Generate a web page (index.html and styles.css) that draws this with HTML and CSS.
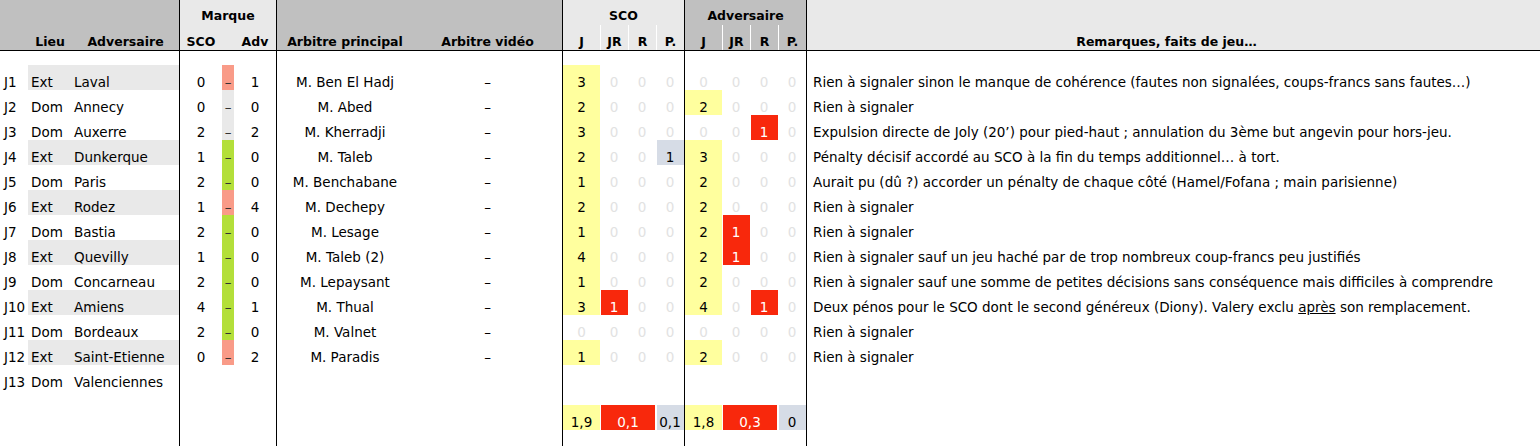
FILE: index.html
```html
<!DOCTYPE html>
<html lang="fr">
<head>
<meta charset="utf-8">
<title>Arbitrage SCO</title>
<link rel="stylesheet" href="styles.css">
</head>
<body>
<div class="sheet">
  <div class="head">
    <div class="row h1">
      <div class="grp g-left dark"></div>
      <div class="grp g-marque light bl">Marque</div>
      <div class="grp g-arb dark bl"></div>
      <div class="grp g-sco light bl">SCO</div>
      <div class="grp g-adv dark bl">Adversaire</div>
      <div class="grp g-rem light bl"></div>
    </div>
    <div class="row h2">
      <div class="hc dark"></div>
      <div class="hc dark ctr">Lieu</div>
      <div class="hc dark ctr">Adversaire</div>
      <div class="hc light bl ctr">SCO</div>
      <div class="hc light"></div>
      <div class="hc light ctr">Adv</div>
      <div class="hc dark bl ctr">Arbitre principal</div>
      <div class="hc dark ctr">Arbitre vidéo</div>
      <div class="hc light bl ctr">J</div>
      <div class="hc light wl ctr">JR</div>
      <div class="hc light wl ctr">R</div>
      <div class="hc light wl ctr">P.</div>
      <div class="hc dark bl ctr">J</div>
      <div class="hc dark wl ctr">JR</div>
      <div class="hc dark wl ctr">R</div>
      <div class="hc dark wl ctr">P.</div>
      <div class="hc light bl rem-h">Remarques, faits de jeu…</div>
    </div>
  </div>

  <div class="row gap gap-top">
    <div class="g-left"></div><div class="g-marque bl"></div><div class="g-arb bl"></div><div class="g-sco bl"></div><div class="g-adv bl"></div><div class="g-rem bl"></div>
  </div>

  <div class="row data">
    <div class="c jn">J1</div><div class="c lieu hl">Ext</div><div class="c opp hl">Laval</div>
    <div class="c ctr bl">0</div><div class="c ctr dash loss">–</div><div class="c ctr">1</div>
    <div class="c arb bl">M. Ben El Hadj</div><div class="c ctr">–</div>
    <div class="c ctr bl y">3</div><div class="c ctr z">0</div><div class="c ctr z">0</div><div class="c ctr z">0</div>
    <div class="c ctr bl z">0</div><div class="c ctr z">0</div><div class="c ctr z">0</div><div class="c ctr z">0</div>
    <div class="c rem bl">Rien à signaler sinon le manque de cohérence (fautes non signalées, coups-francs sans fautes…)</div>
  </div>
  <div class="row data">
    <div class="c jn">J2</div><div class="c lieu">Dom</div><div class="c opp">Annecy</div>
    <div class="c ctr bl">0</div><div class="c ctr dash draw">–</div><div class="c ctr">0</div>
    <div class="c arb bl">M. Abed</div><div class="c ctr">–</div>
    <div class="c ctr bl y">2</div><div class="c ctr z">0</div><div class="c ctr z">0</div><div class="c ctr z">0</div>
    <div class="c ctr bl y">2</div><div class="c ctr z">0</div><div class="c ctr z">0</div><div class="c ctr z">0</div>
    <div class="c rem bl">Rien à signaler</div>
  </div>
  <div class="row data">
    <div class="c jn">J3</div><div class="c lieu">Dom</div><div class="c opp">Auxerre</div>
    <div class="c ctr bl">2</div><div class="c ctr dash draw">–</div><div class="c ctr">2</div>
    <div class="c arb bl">M. Kherradji</div><div class="c ctr">–</div>
    <div class="c ctr bl y">3</div><div class="c ctr z">0</div><div class="c ctr z">0</div><div class="c ctr z">0</div>
    <div class="c ctr bl z">0</div><div class="c ctr z">0</div><div class="c ctr r">1</div><div class="c ctr z">0</div>
    <div class="c rem bl">Expulsion directe de Joly (20’) pour pied-haut ; annulation du 3ème but angevin pour hors-jeu.</div>
  </div>
  <div class="row data">
    <div class="c jn">J4</div><div class="c lieu hl">Ext</div><div class="c opp hl">Dunkerque</div>
    <div class="c ctr bl">1</div><div class="c ctr dash win">–</div><div class="c ctr">0</div>
    <div class="c arb bl">M. Taleb</div><div class="c ctr">–</div>
    <div class="c ctr bl y">2</div><div class="c ctr z">0</div><div class="c ctr z">0</div><div class="c ctr b">1</div>
    <div class="c ctr bl y">3</div><div class="c ctr z">0</div><div class="c ctr z">0</div><div class="c ctr z">0</div>
    <div class="c rem bl">Pénalty décisif accordé au SCO à la fin du temps additionnel… à tort.</div>
  </div>
  <div class="row data">
    <div class="c jn">J5</div><div class="c lieu">Dom</div><div class="c opp">Paris</div>
    <div class="c ctr bl">2</div><div class="c ctr dash win">–</div><div class="c ctr">0</div>
    <div class="c arb bl">M. Benchabane</div><div class="c ctr">–</div>
    <div class="c ctr bl y">1</div><div class="c ctr z">0</div><div class="c ctr z">0</div><div class="c ctr z">0</div>
    <div class="c ctr bl y">2</div><div class="c ctr z">0</div><div class="c ctr z">0</div><div class="c ctr z">0</div>
    <div class="c rem bl">Aurait pu (dû ?) accorder un pénalty de chaque côté (Hamel/Fofana ; main parisienne)</div>
  </div>
  <div class="row data">
    <div class="c jn">J6</div><div class="c lieu hl">Ext</div><div class="c opp hl">Rodez</div>
    <div class="c ctr bl">1</div><div class="c ctr dash loss">–</div><div class="c ctr">4</div>
    <div class="c arb bl">M. Dechepy</div><div class="c ctr">–</div>
    <div class="c ctr bl y">2</div><div class="c ctr z">0</div><div class="c ctr z">0</div><div class="c ctr z">0</div>
    <div class="c ctr bl y">2</div><div class="c ctr z">0</div><div class="c ctr z">0</div><div class="c ctr z">0</div>
    <div class="c rem bl">Rien à signaler</div>
  </div>
  <div class="row data">
    <div class="c jn">J7</div><div class="c lieu">Dom</div><div class="c opp">Bastia</div>
    <div class="c ctr bl">2</div><div class="c ctr dash win">–</div><div class="c ctr">0</div>
    <div class="c arb bl">M. Lesage</div><div class="c ctr">–</div>
    <div class="c ctr bl y">1</div><div class="c ctr z">0</div><div class="c ctr z">0</div><div class="c ctr z">0</div>
    <div class="c ctr bl y">2</div><div class="c ctr r">1</div><div class="c ctr z">0</div><div class="c ctr z">0</div>
    <div class="c rem bl">Rien à signaler</div>
  </div>
  <div class="row data">
    <div class="c jn">J8</div><div class="c lieu hl">Ext</div><div class="c opp hl">Quevilly</div>
    <div class="c ctr bl">1</div><div class="c ctr dash win">–</div><div class="c ctr">0</div>
    <div class="c arb bl">M. Taleb (2)</div><div class="c ctr">–</div>
    <div class="c ctr bl y">4</div><div class="c ctr z">0</div><div class="c ctr z">0</div><div class="c ctr z">0</div>
    <div class="c ctr bl y">2</div><div class="c ctr r">1</div><div class="c ctr z">0</div><div class="c ctr z">0</div>
    <div class="c rem bl">Rien à signaler sauf un jeu haché par de trop nombreux coup-francs peu justifiés</div>
  </div>
  <div class="row data">
    <div class="c jn">J9</div><div class="c lieu">Dom</div><div class="c opp">Concarneau</div>
    <div class="c ctr bl">2</div><div class="c ctr dash win">–</div><div class="c ctr">0</div>
    <div class="c arb bl">M. Lepaysant</div><div class="c ctr">–</div>
    <div class="c ctr bl y">1</div><div class="c ctr z">0</div><div class="c ctr z">0</div><div class="c ctr z">0</div>
    <div class="c ctr bl y">2</div><div class="c ctr z">0</div><div class="c ctr z">0</div><div class="c ctr z">0</div>
    <div class="c rem bl">Rien à signaler sauf une somme de petites décisions sans conséquence mais difficiles à comprendre</div>
  </div>
  <div class="row data">
    <div class="c jn">J10</div><div class="c lieu hl">Ext</div><div class="c opp hl">Amiens</div>
    <div class="c ctr bl">4</div><div class="c ctr dash win">–</div><div class="c ctr">1</div>
    <div class="c arb bl">M. Thual</div><div class="c ctr">–</div>
    <div class="c ctr bl y">3</div><div class="c ctr r">1</div><div class="c ctr z">0</div><div class="c ctr z">0</div>
    <div class="c ctr bl y">4</div><div class="c ctr z">0</div><div class="c ctr r">1</div><div class="c ctr z">0</div>
    <div class="c rem bl">Deux pénos pour le SCO dont le second généreux (Diony). Valery exclu <u>après</u> son remplacement.</div>
  </div>
  <div class="row data">
    <div class="c jn">J11</div><div class="c lieu">Dom</div><div class="c opp">Bordeaux</div>
    <div class="c ctr bl">2</div><div class="c ctr dash win">–</div><div class="c ctr">0</div>
    <div class="c arb bl">M. Valnet</div><div class="c ctr">–</div>
    <div class="c ctr bl z">0</div><div class="c ctr z">0</div><div class="c ctr z">0</div><div class="c ctr z">0</div>
    <div class="c ctr bl z">0</div><div class="c ctr z">0</div><div class="c ctr z">0</div><div class="c ctr z">0</div>
    <div class="c rem bl">Rien à signaler</div>
  </div>
  <div class="row data">
    <div class="c jn">J12</div><div class="c lieu hl">Ext</div><div class="c opp hl">Saint-Etienne</div>
    <div class="c ctr bl">0</div><div class="c ctr dash loss">–</div><div class="c ctr">2</div>
    <div class="c arb bl">M. Paradis</div><div class="c ctr">–</div>
    <div class="c ctr bl y">1</div><div class="c ctr z">0</div><div class="c ctr z">0</div><div class="c ctr z">0</div>
    <div class="c ctr bl y">2</div><div class="c ctr z">0</div><div class="c ctr z">0</div><div class="c ctr z">0</div>
    <div class="c rem bl">Rien à signaler</div>
  </div>
  <div class="row data">
    <div class="c jn">J13</div><div class="c lieu">Dom</div><div class="c opp">Valenciennes</div>
    <div class="c bl"></div><div class="c"></div><div class="c"></div>
    <div class="c bl"></div><div class="c"></div>
    <div class="c bl"></div><div class="c"></div><div class="c"></div><div class="c"></div>
    <div class="c bl"></div><div class="c"></div><div class="c"></div><div class="c"></div>
    <div class="c bl"></div>
  </div>

  <div class="row gap gap-mid">
    <div class="g-left"></div><div class="g-marque bl"></div><div class="g-arb bl"></div><div class="g-sco bl"></div><div class="g-adv bl"></div><div class="g-rem bl"></div>
  </div>

  <div class="row data">
    <div class="g-left"></div><div class="g-marque bl"></div><div class="g-arb bl"></div>
    <div class="c ctr bl y">1,9</div><div class="c ctr r avg-r">0,1</div><div class="c ctr b avg-b">0,1</div>
    <div class="c ctr bl y">1,8</div><div class="c ctr r avg-r">0,3</div><div class="c ctr b avg-b">0</div>
    <div class="g-rem bl"></div>
  </div>

  <div class="row gap gap-end">
    <div class="g-left"></div><div class="g-marque bl"></div><div class="g-arb bl"></div><div class="g-sco bl"></div><div class="g-adv bl"></div><div class="g-rem bl"></div>
  </div>
</div>
</body>
</html>
```

FILE: styles.css
```css
* { box-sizing: border-box; }

html, body {
  margin: 0;
  padding: 0;
  background: #fff;
}

body {
  font-family: "DejaVu Sans", Verdana, sans-serif;
  font-size: 13.5px;
  color: #000;
}

.sheet {
  width: 1540px;
  height: 446px;
  display: flex;
  flex-direction: column;
  overflow: hidden;
}

.row {
  display: grid;
  grid-template-columns: 28px 44px 107px 43px 12px 42px 137px 149px 38px 28px 28px 28px 38px 28px 28px 28px 1fr;
}

.head {
  border-bottom: 1px solid #000;
}

.h1, .h2 {
  height: 25px;
  font-size: 12.5px;
  font-weight: bold;
  line-height: 14px;
}

.h1 > div { padding-top: 9px; text-align: center; }
.h2 > div { padding-top: 10px; white-space: nowrap; }

.dark { background: #c0c0c0; }
.light { background: #e9e9e9; }

.bl { border-left: 1px solid #000; }
.wl { border-left: 1px solid #fff; }

.ctr { text-align: center; }

.rem-h {
  text-align: center;
  padding-right: 14px;
}

.g-left { grid-column: 1 / 4; }
.g-marque { grid-column: 4 / 7; }
.g-arb { grid-column: 7 / 9; }
.g-sco { grid-column: 9 / 13; }
.g-adv { grid-column: 13 / 17; }
.g-rem { grid-column: 17 / 18; }

.gap-top { height: 14px; }
.gap-mid { height: 15px; }
.gap-end { flex: 1; }

.data { height: 25px; }

.c {
  padding-top: 10px;
  line-height: 14px;
  white-space: nowrap;
}

.jn { padding-left: 4px; }
.lieu { padding-left: 3px; }
.opp { padding-left: 2px; }
.hl { background: #e9e9e9; }

.arb { text-align: center; }

.dash { color: #333; }
.win { background: #b3df3a; }
.loss { background: #f99b88; }
.draw { background: #e9e9e9; }

.y { background: #ffff9e; }
.z { color: #e2e2e2; }
.r {
  background: #f8280c;
  color: #fff;
  box-shadow: inset 1px 0 #fff;
}
.b {
  background: #d6dce6;
  box-shadow: inset 1px 0 #fff;
}

.avg-r {
  grid-column: span 2;
  box-shadow: inset 1px 0 #fff, inset -1px 0 #fff;
}

.rem { padding-left: 6px; }
```
